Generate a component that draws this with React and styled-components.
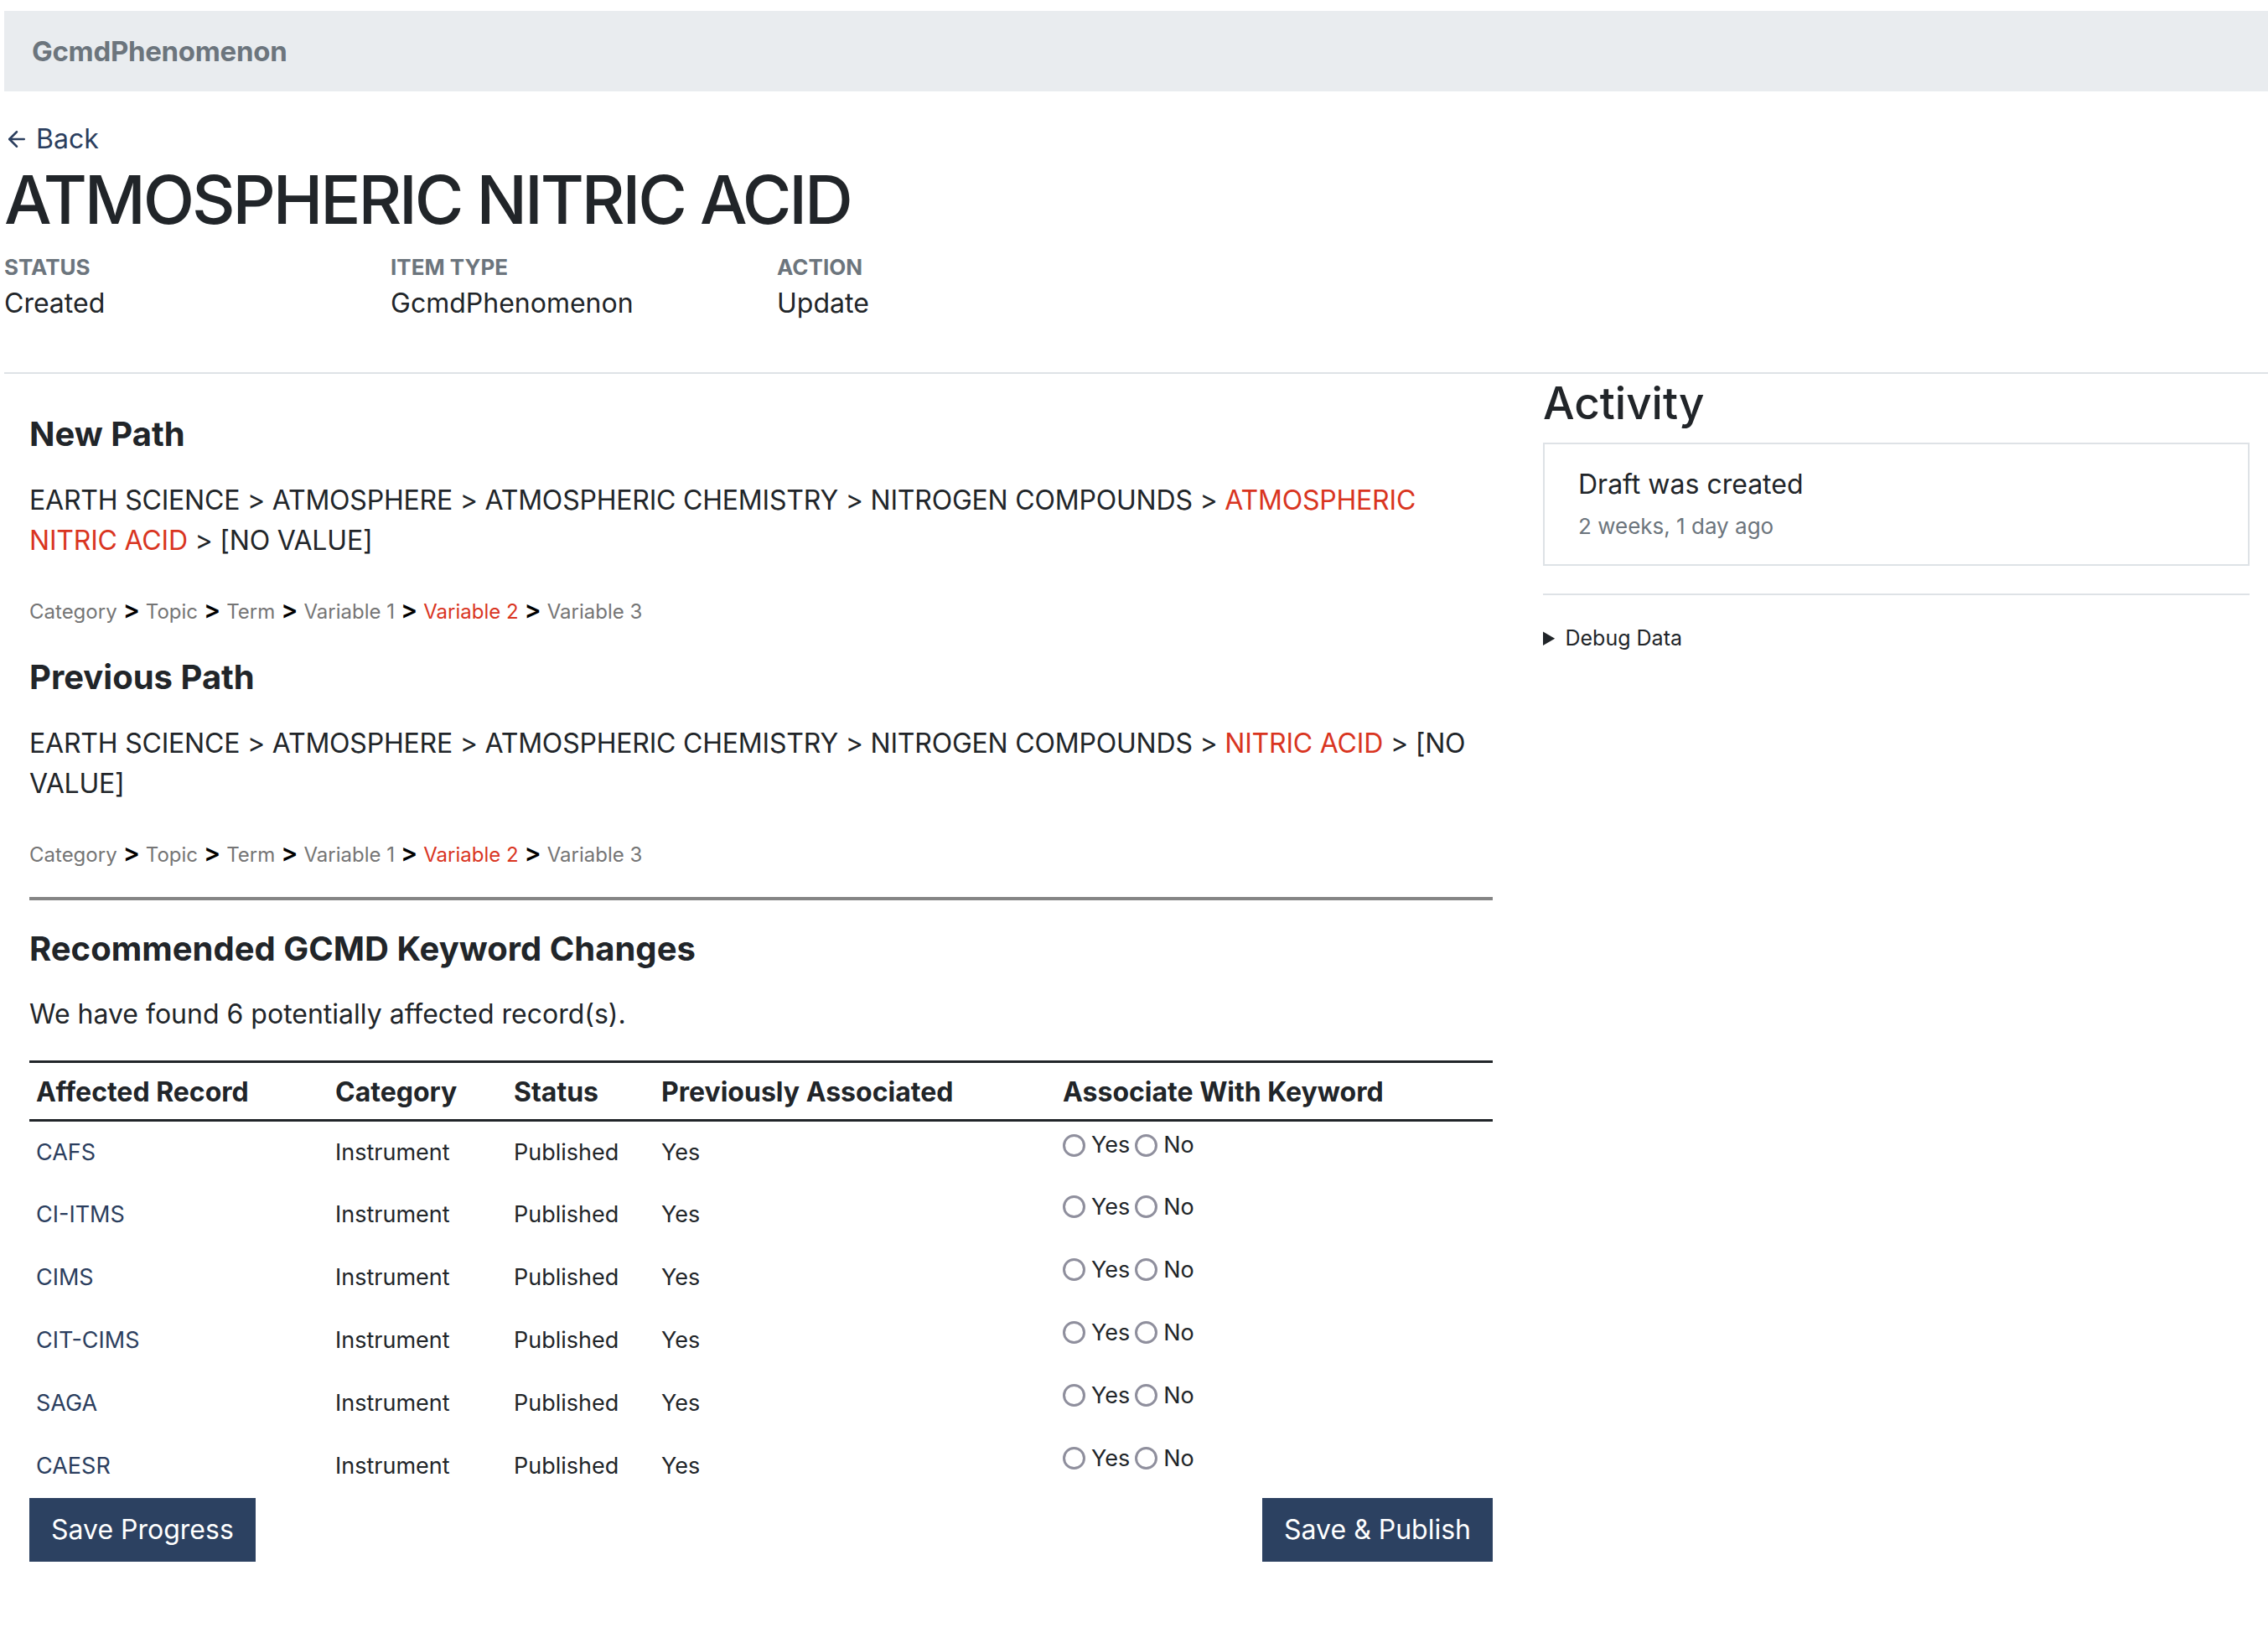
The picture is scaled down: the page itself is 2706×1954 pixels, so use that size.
import styled, { createGlobalStyle } from 'styled-components';
import { ArrowLeft } from 'lucide-react';

const GlobalStyle = createGlobalStyle`
    body {
        margin: 0;
        background: #FFFFFF;
        font-family: Inter, 'Noto Sans', sans-serif;
        color: #212529;
    }
    * {
        box-sizing: border-box;
    }
`;

const records = [
    { name: "CAFS", category: "Instrument", status: "Published", previous: "Yes" },
    { name: "CI-ITMS", category: "Instrument", status: "Published", previous: "Yes" },
    { name: "CIMS", category: "Instrument", status: "Published", previous: "Yes" },
    { name: "CIT-CIMS", category: "Instrument", status: "Published", previous: "Yes" },
    { name: "SAGA", category: "Instrument", status: "Published", previous: "Yes" },
    { name: "CAESR", category: "Instrument", status: "Published", previous: "Yes" },
];

const levels = ["Category", "Topic", "Term", "Variable 1", "Variable 2", "Variable 3"];

function LevelLine() {
    return (
        <LevelTrail>
            {levels.map((level, i) => (
                <span key={level}>
                    {i > 0 && <LevelArrow>&gt;</LevelArrow>}
                    <Level $changed={level === "Variable 2"}>{level}</Level>
                </span>
            ))}
        </LevelTrail>
    );
}

export default function App() {
    return (
        <Page>
            <GlobalStyle />
            <TopBar>
                <TopBarTitle>GcmdPhenomenon</TopBarTitle>
            </TopBar>

            <Intro>
                <BackLink href="#">
                    <ArrowLeft size={30} strokeWidth={2} />
                    Back
                </BackLink>
                <Title>ATMOSPHERIC NITRIC ACID</Title>
                <MetaGrid>
                    <div>
                        <MetaLabel>Status</MetaLabel>
                        <MetaValue>Created</MetaValue>
                    </div>
                    <div>
                        <MetaLabel>Item Type</MetaLabel>
                        <MetaValue>GcmdPhenomenon</MetaValue>
                    </div>
                    <div>
                        <MetaLabel>Action</MetaLabel>
                        <MetaValue>Update</MetaValue>
                    </div>
                </MetaGrid>
            </Intro>

            <Divider />

            <Columns>
                <Main>
                    <SectionTitle>New Path</SectionTitle>
                    <KeywordPath>
                        EARTH SCIENCE &gt; ATMOSPHERE &gt; ATMOSPHERIC CHEMISTRY &gt; NITROGEN COMPOUNDS &gt;{" "}
                        <Changed>ATMOSPHERIC NITRIC ACID</Changed> &gt; [NO VALUE]
                    </KeywordPath>
                    <LevelLine />

                    <SectionTitle>Previous Path</SectionTitle>
                    <KeywordPath>
                        EARTH SCIENCE &gt; ATMOSPHERE &gt; ATMOSPHERIC CHEMISTRY &gt; NITROGEN COMPOUNDS &gt;{" "}
                        <Changed>NITRIC ACID</Changed> &gt; [NO VALUE]
                    </KeywordPath>
                    <LevelLine />

                    <ThickRule />

                    <SectionTitle>Recommended GCMD Keyword Changes</SectionTitle>
                    <Found>We have found 6 potentially affected record(s).</Found>

                    <RecordTable>
                        <colgroup>
                            <col style={{ width: 357 }} />
                            <col style={{ width: 213 }} />
                            <col style={{ width: 176 }} />
                            <col style={{ width: 479 }} />
                            <col />
                        </colgroup>
                        <thead>
                            <tr>
                                <Th>Affected Record</Th>
                                <Th>Category</Th>
                                <Th>Status</Th>
                                <Th>Previously Associated</Th>
                                <Th>Associate With Keyword</Th>
                            </tr>
                        </thead>
                        <tbody>
                            {records.map(r => (
                                <tr key={r.name}>
                                    <Td><RecordLink href="#">{r.name}</RecordLink></Td>
                                    <Td>{r.category}</Td>
                                    <Td>{r.status}</Td>
                                    <Td>{r.previous}</Td>
                                    <ChoiceCell>
                                        <Choice>
                                            <Radio type="radio" name={r.name} />
                                            Yes
                                        </Choice>
                                        <Choice>
                                            <Radio type="radio" name={r.name} />
                                            No
                                        </Choice>
                                    </ChoiceCell>
                                </tr>
                            ))}
                        </tbody>
                    </RecordTable>

                    <Actions>
                        <Button>Save Progress</Button>
                        <Button>Save &amp; Publish</Button>
                    </Actions>
                </Main>

                <Side>
                    <ActivityTitle>Activity</ActivityTitle>
                    <ActivityCard>
                        <ActivityText>Draft was created</ActivityText>
                        <ActivityTime>2 weeks, 1 day ago</ActivityTime>
                    </ActivityCard>
                    <SideRule />
                    <Debug>
                        <summary>Debug Data</summary>
                    </Debug>
                </Side>
            </Columns>
        </Page>
    );
}

const Page = styled.div`
    padding: 13px 0 120px 5px;
`;

const TopBar = styled.div`
    height: 96px;
    background: #E9ECEF;
    display: flex;
    align-items: center;
    padding-left: 33px;
`;

const TopBarTitle = styled.div`
    font-size: 33px;
    font-weight: 700;
    color: #6C757D;
    letter-spacing: -0.3px;
`;

const Intro = styled.div`
    padding-top: 33px;
`;

const BackLink = styled.a`
    display: inline-flex;
    align-items: center;
    gap: 8px;
    font-size: 32px;
    line-height: 48px;
    color: #2B3E5E;
    text-decoration: none;
`;

const Title = styled.h1`
    margin: 0;
    font-size: 80px;
    font-weight: 500;
    line-height: 96px;
    letter-spacing: -3.1px;
    color: #212529;
`;

const MetaGrid = styled.div`
    display: grid;
    grid-template-columns: repeat(3, 461px);
    padding-top: 14px;
`;

const MetaLabel = styled.div`
    font-size: 26px;
    font-weight: 700;
    line-height: 38px;
    text-transform: uppercase;
    color: #6C757D;
`;

const MetaValue = styled.div`
    font-size: 32px;
    line-height: 48px;
    color: #212529;
`;

const Divider = styled.hr`
    margin: 58px 0 0 0;
    border: none;
    border-top: 2px solid #DEE2E6;
`;

const Columns = styled.div`
    display: grid;
    grid-template-columns: 1806px 1fr;
`;

const Main = styled.div`
    padding: 48px 30px 0 30px;
`;

const SectionTitle = styled.h5`
    margin: 0 0 31px 0;
    font-size: 40px;
    font-weight: 700;
    line-height: 48px;
    color: #212529;
`;

const KeywordPath = styled.p`
    margin: 0 0 39px 0;
    font-size: 32px;
    line-height: 48px;
    letter-spacing: -0.2px;
    color: #212529;
`;

const Changed = styled.span`
    color: #D9351F;
`;

const LevelTrail = styled.div`
    margin-bottom: 35px;
    font-size: 24px;
    line-height: 38px;
`;

const Level = styled.span`
    color: ${props => props.$changed ? "#D9351F" : "#757575"};
`;

const LevelArrow = styled.span`
    margin: 0 7px;
    font-size: 30px;
    font-weight: 600;
    color: #000000;
`;

const ThickRule = styled.hr`
    margin: -4px 0 34px 0;
    border: none;
    border-top: 4px solid #858585;
`;

const Found = styled.p`
    margin: -1px 0 31px 0;
    font-size: 32px;
    line-height: 48px;
`;

const RecordTable = styled.table`
    width: 100%;
    table-layout: fixed;
    border-collapse: collapse;
    border-top: 3px solid #212529;
`;

const Th = styled.th`
    padding: 11px 8px 8px 8px;
    border-bottom: 3px solid #212529;
    font-size: 32px;
    font-weight: 700;
    line-height: 48px;
    text-align: left;
`;

const Td = styled.td`
    height: 75px;
    padding: 0 8px;
    font-size: 27px;
    line-height: 40px;
    vertical-align: middle;
`;

const ChoiceCell = styled(Td)`
    vertical-align: top;
    padding-top: 8px;
`;

const RecordLink = styled.a`
    color: #2B3E5E;
    text-decoration: none;
`;

const Choice = styled.label`
    display: inline-flex;
    align-items: center;
    gap: 7px;
    margin-right: 6px;
`;

const Radio = styled.input`
    appearance: none;
    margin: 0;
    width: 27px;
    height: 27px;
    border: 3px solid #8F8F9D;
    border-radius: 50%;
    background: #FFFFFF;
`;

const Actions = styled.div`
    display: flex;
    justify-content: space-between;
`;

const Button = styled.button`
    padding: 14px 26px;
    border: none;
    border-radius: 0;
    background: #2C4161;
    font-family: Inter, sans-serif;
    font-size: 32px;
    line-height: 48px;
    color: #FFFFFF;
`;

const Side = styled.div`
    padding: 2px 22px 0 30px;
`;

const ActivityTitle = styled.h3`
    margin: 0 0 13px 0;
    font-size: 53px;
    font-weight: 500;
    line-height: 67px;
    color: #212529;
`;

const ActivityCard = styled.div`
    padding: 24px 40px 25px 40px;
    border: 2px solid #DEE2E6;
`;

const ActivityText = styled.div`
    font-size: 32px;
    line-height: 48px;
`;

const ActivityTime = styled.div`
    margin-top: 6px;
    font-size: 26px;
    line-height: 40px;
    color: #6C757D;
`;

const SideRule = styled.hr`
    margin: 33px 0 31px 0;
    border: none;
    border-top: 2px solid #DEE2E6;
`;

const Debug = styled.details`
    font-size: 25px;
    line-height: 40px;

    summary {
        cursor: pointer;
    }
`;
